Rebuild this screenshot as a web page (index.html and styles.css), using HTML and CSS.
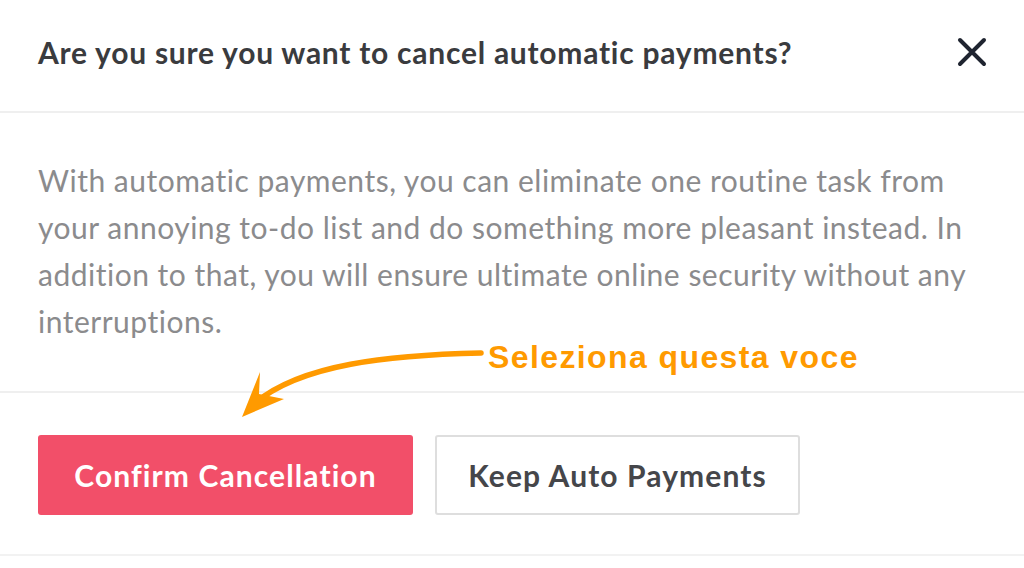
FILE: index.html
```html
<!DOCTYPE html>
<html>
<head>
<meta charset="utf-8">
<link rel="stylesheet" href="styles.css">
</head>
<body>
<div class="modal">
  <div class="header">
    <h1 class="title">Are you sure you want to cancel automatic payments?</h1>
    <svg class="close" width="32" height="30" viewBox="0 0 32 30"><path d="M4 3 L28 27 M28 3 L4 27" stroke="#1f2430" stroke-width="4" stroke-linecap="round"/></svg>
  </div>
  <div class="body">
    <p class="text">With automatic payments, you can eliminate one routine task from your annoying to-do list and do something more pleasant instead. In addition to that, you will ensure ultimate online security without any interruptions.</p>
  </div>
  <div class="footer">
    <button class="btn btn-primary">Confirm Cancellation</button>
    <button class="btn btn-secondary">Keep Auto Payments</button>
  </div>
  <div class="note">Seleziona questa voce</div>
  <svg class="arrow" width="1024" height="568" viewBox="0 0 1024 568">
    <path d="M481 353 C 390 355, 300 364, 254 404" fill="none" stroke="#ff9a00" stroke-width="5.5" stroke-linecap="round"/>
    <polygon points="242,417 260,372 259,394 284,399" fill="#ff9a00"/>
  </svg>
</div>
</body>
</html>
```
FILE: styles.css
```css
* { box-sizing: border-box; }
html, body { margin: 0; padding: 0; background: #fff; }
body { width: 1024px; height: 568px; overflow: hidden; font-family: "Lato", "Liberation Sans", sans-serif; }
.modal { position: relative; width: 1024px; height: 568px; }
.header {
  height: 113px;
  display: flex;
  align-items: center;
  justify-content: space-between;
  padding: 0 36px 8px 38px;
  border-bottom: 2px solid #efefef;
}
.title {
  margin: 0;
  font-size: 30px;
  font-weight: 700;
  color: #3a3b3e;
  letter-spacing: 0.75px;
}
.body {
  height: 280px;
  padding: 44px 38px 0 38px;
  border-bottom: 2px solid #efefef;
}
.text {
  margin: 0;
  font-size: 30px;
  line-height: 47px;
  color: #8b8b8d;
  letter-spacing: 0.5px;
  width: 960px;
}
.footer {
  height: 163px;
  display: flex;
  gap: 22px;
  padding: 42px 38px 0 38px;
  border-bottom: 2px solid #f2f2f2;
}
.btn {
  height: 80px;
  font-family: "Lato", "Liberation Sans", sans-serif;
  font-size: 30px;
  font-weight: 700;
  letter-spacing: 1.1px;
  border-radius: 3px;
  padding: 0;
}
.btn-primary {
  width: 375px;
  background: #f24f69;
  color: #fff;
  border: none;
}
.btn-secondary {
  width: 365px;
  background: #fff;
  color: #45464a;
  border: 2px solid #dedede;
}
.note {
  position: absolute;
  left: 488px;
  top: 339px;
  font-family: "Liberation Sans", Arial, sans-serif;
  font-weight: 700;
  font-size: 32px;
  letter-spacing: 1.4px;
  color: #ff9a00;
}
.arrow { position: absolute; left: 0; top: 0; pointer-events: none; }
```
